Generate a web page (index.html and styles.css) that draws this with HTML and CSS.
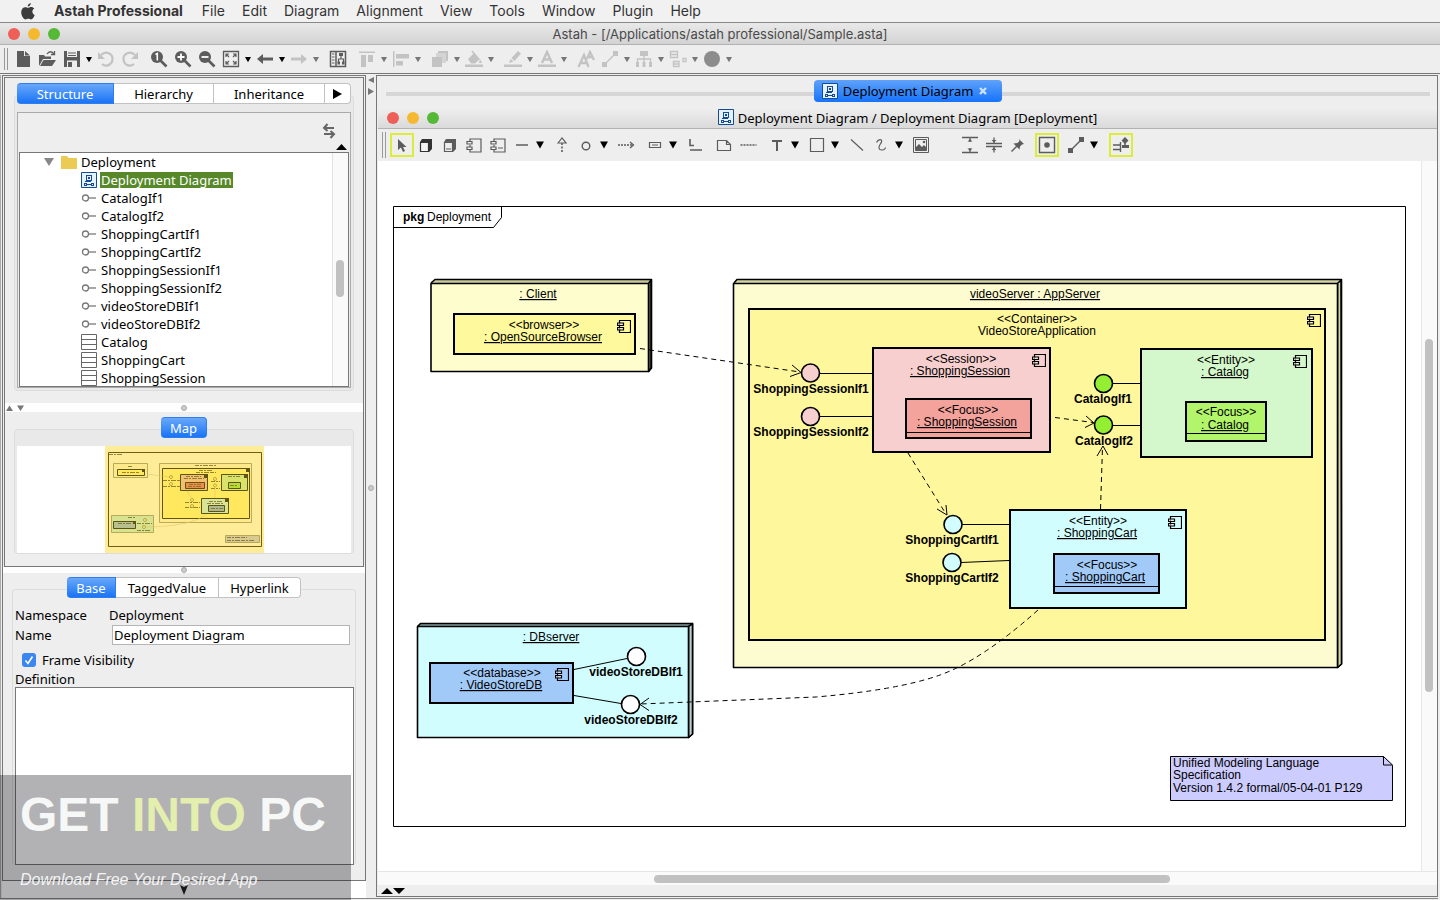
FILE: index.html
```html
<!DOCTYPE html>
<html lang="en">
<head>
<meta charset="utf-8">
<title>Astah - [/Applications/astah professional/Sample.asta]</title>
<link rel="stylesheet" href="styles.css">
</head>
<body>
<svg class="defs" aria-hidden="true">
  <symbol id="down" viewBox="0 0 8 8"><path d="M0 .5h8L4 7.5z" fill="currentColor"/></symbol>
  <symbol id="deploy" viewBox="0 0 16 16"><path d="M.5.5h15v15H.5z" fill="#e4f1ff" stroke="#154a94"/><path fill-rule="evenodd" fill="#154a94" d="M5 3h6v6H5zM6 4v4h4V4zM7 5h2v2H7zM4 9h6v1H4zM3 11h3v1h4v-1h3v3h-3v-1H6v1H3zM4 12v1h1v-1zM11 12v1h1v-1z"/></symbol>
  <symbol id="iface" viewBox="0 0 16 16"><circle cx="4.500" cy="8" r="3" fill="none" stroke="#777" stroke-width="1.300"/><path d="M7.500 8H15" stroke="#777" stroke-width="1.300"/></symbol>
  <symbol id="class" viewBox="0 0 16 16"><path d="M.5.5h15v15H.5zM.5 5.500h15M.5 10.500h15" fill="#fff" stroke="#666"/></symbol>
  <symbol id="comp" viewBox="0 0 14 14"><path d="M2.500.5h11v12h-11z" fill="none" stroke="#000" stroke-width="1.200"/><path d="M.5 3h6v2.500h-6zM.5 7.500h6V10h-6z" fill="#eee" fill-opacity=".6" stroke="#000" stroke-width="1.200"/></symbol>
  <symbol id="lens" viewBox="0 0 18 18"><circle cx="7" cy="7" r="6" fill="currentColor"/><path d="M10.500 10.500l6 6" stroke="currentColor" stroke-width="2.600"/></symbol>
</svg>

<nav class="menubar" aria-label="Application menu">
  <svg class="apple" viewBox="0 0 14 17"><path d="M9.800 0c.1 1.800-1.400 3.600-3.100 3.600C6.500 1.900 8.200.2 9.800 0zM7 4.800c.8 0 1.700-.8 3.200-.8 1.200 0 2.400.7 3 1.600-2.700 1.600-2.200 5.300.5 6.400C13 14 11.600 16.400 10 16.400c-1 0-1.400-.7-2.700-.7-1.300 0-1.800.7-2.700.7C2.500 16.400.2 12.600.2 9.300.2 6 2.200 4.200 4.200 4.200c1.200 0 2.100.6 2.800.6z" fill="#3c3c3c"/></svg>
  <button class="menu strong">Astah Professional</button>
  <button class="menu">File</button><button class="menu">Edit</button><button class="menu">Diagram</button><button class="menu">Alignment</button><button class="menu">View</button><button class="menu">Tools</button><button class="menu">Window</button><button class="menu">Plugin</button><button class="menu">Help</button>
</nav>

<header class="titlebar">
  <div class="lights"><button class="red" aria-label="Close"></button><button class="amber" aria-label="Minimize"></button><button class="green" aria-label="Zoom"></button></div>
  <h1>Astah - [/Applications/astah professional/Sample.asta]</h1>
</header>

<div class="toolbar main-tools" role="toolbar" aria-label="Main">
  <span class="grip"></span>
  <button class="tool" aria-label="New"><svg viewBox="0 0 18 18"><path d="M3 1h7v5h6v11H3zM11 1l5 4.500h-5z" fill="currentColor"/></svg></button>
  <button class="tool" aria-label="Open"><svg viewBox="0 0 18 18"><path d="M1 16V5h5l1 1.500h6V9H5zM5.500 10H18l-4 6H2z" fill="currentColor"/><path d="M9 4c2-3 5-3 7 0M16.500 1v3.500H13" fill="none" stroke="currentColor" stroke-width="1.300"/></svg></button>
  <button class="tool g1" aria-label="Save"><svg viewBox="0 0 18 18"><path d="M1 1h16v16H1z" fill="currentColor"/><path d="M4 1h10v6H4zM4 10.500h10V17H4z" fill="#eee"/><path d="M5 2.500h8v1H5zM5 5h8v1H5zM5 12h4v5H5z" fill="currentColor"/></svg></button>
  <button class="drop" aria-label="Save options"><svg><use href="#down"/></svg></button>
  <button class="tool off" aria-label="Undo"><svg viewBox="0 0 18 18"><path d="M4 5c5-5 12-1 11.500 4.500C15 15 9 17.500 5 14" fill="none" stroke="currentColor" stroke-width="2.200"/><path d="M1 2v7h7z" fill="currentColor"/></svg></button>
  <button class="tool off" aria-label="Redo"><svg viewBox="0 0 18 18"><path d="M14 5C9 0 2 4 2.500 9.500 3 15 9 17.500 13 14" fill="none" stroke="currentColor" stroke-width="2.200"/><path d="M17 2v7h-7z" fill="currentColor"/></svg></button>
  <button class="tool g5" aria-label="Actual size"><svg viewBox="0 0 18 18"><use href="#lens"/><path d="M5.500 4.500L7.300 3.500v7" fill="none" stroke="#fff" stroke-width="1.600"/></svg></button>
  <button class="tool" aria-label="Zoom in"><svg viewBox="0 0 18 18"><use href="#lens"/><path d="M3.500 7h7M7 3.500v7" stroke="#fff" stroke-width="1.800"/></svg></button>
  <button class="tool" aria-label="Zoom out"><svg viewBox="0 0 18 18"><use href="#lens"/><path d="M3.500 7h7" stroke="#fff" stroke-width="1.800"/></svg></button>
  <button class="tool" aria-label="Fit"><svg viewBox="0 0 18 18"><path d="M1.500 1.500h15v15h-15z" fill="none" stroke="currentColor" stroke-width="1.300"/><path d="M4 7V4h3M11 4h3v3M14 11v3h-3M7 14H4v-3M4 4l3 3M14 4l-3 3M14 14l-3-3M4 14l3-3" fill="none" stroke="currentColor" stroke-width="1.200"/></svg></button>
  <button class="drop" aria-label="Fit options"><svg><use href="#down"/></svg></button>
  <button class="tool" aria-label="Back"><svg viewBox="0 0 18 18"><path d="M1 9l6-5v3.500h10v3H7V14z" fill="currentColor"/></svg></button>
  <button class="drop" aria-label="Back history"><svg><use href="#down"/></svg></button>
  <button class="tool off" aria-label="Forward"><svg viewBox="0 0 18 18"><path d="M17 9l-6-5v3.500H1v3h10V14z" fill="currentColor"/></svg></button>
  <button class="drop dim" aria-label="Forward history"><svg><use href="#down"/></svg></button>
  <button class="tool g5" aria-label="Structure map"><svg viewBox="0 0 18 18"><path d="M1.500 1.500h15v15h-15zM7 1.500v15" fill="none" stroke="currentColor" stroke-width="1.500"/><path d="M3 4h2.500M3 7h2.500M3 10h2.500M3 13h2.500M12 6v3M9.500 13V9h5v4" fill="none" stroke="currentColor" stroke-width="1.200"/><path d="M10 3h4v3h-4zM8.500 11.500H11v3H8.500zM13 11.500h2.500v3H13z" fill="currentColor"/></svg></button>
  <button class="tool off g5" aria-label="Align top"><svg viewBox="0 0 18 18"><path d="M1 1.500h16v1.500H1zM3 5h5v12H3zM10 5h5v7h-5z" fill="currentColor"/></svg></button>
  <button class="drop dim" aria-label="Align top options"><svg><use href="#down"/></svg></button>
  <button class="tool off" aria-label="Align left"><svg viewBox="0 0 18 18"><path d="M1 1h1.500v16H1zM4 4h13v4.500H4zM4 11h7v4.500H4z" fill="currentColor"/></svg></button>
  <button class="drop dim" aria-label="Align left options"><svg><use href="#down"/></svg></button>
  <button class="tool off g5" aria-label="Depth"><svg viewBox="0 0 18 18"><path d="M7 1h10v10h-2V3H7z" fill="currentColor"/><path d="M5 3h10v10H5z" fill="currentColor" opacity=".6"/><path d="M1 7h10v10H1z" fill="currentColor"/></svg></button>
  <button class="drop dim" aria-label="Depth options"><svg><use href="#down"/></svg></button>
  <button class="tool off" aria-label="Fill color"><svg viewBox="0 0 18 18"><path d="M0 14.500h18V17H0zM3 9l6-6 6 6-5 4.500H6zM15 9l2 4h-3z" fill="currentColor"/><path d="M7 1l5 6" stroke="currentColor" stroke-width="1.500"/></svg></button>
  <button class="drop dim" aria-label="Fill color options"><svg><use href="#down"/></svg></button>
  <button class="tool off g5" aria-label="Line color"><svg viewBox="0 0 18 18"><path d="M0 14.500h18V17H0zM5 13l1.500-4 3 2.500zM7.500 8L14 1l3 2.500L10.500 11z" fill="currentColor"/></svg></button>
  <button class="drop dim" aria-label="Line color options"><svg><use href="#down"/></svg></button>
  <button class="tool off" aria-label="Font color"><svg viewBox="0 0 18 18"><path d="M0 14.500h18V17H0z" fill="currentColor"/><path d="M4 13L9 2l5 11M6 9.500h6" fill="none" stroke="currentColor" stroke-width="2.400"/></svg></button>
  <button class="drop dim" aria-label="Font color options"><svg><use href="#down"/></svg></button>
  <button class="tool off g5" aria-label="Font"><svg viewBox="0 0 18 18"><path d="M1.500 17L7 5l4.500 12M4 13h6M10 9l3-7 4 8M12 7h4" fill="none" stroke="currentColor" stroke-width="2.300"/></svg></button>
  <button class="tool off" aria-label="Line style"><svg viewBox="0 0 18 18"><path d="M1 12h5v5H1zM12 1h5v5h-5z" fill="currentColor"/><path d="M4 14L14 4" stroke="currentColor" stroke-width="1.500"/></svg></button>
  <button class="drop dim" aria-label="Line style options"><svg><use href="#down"/></svg></button>
  <button class="tool off" aria-label="Tree layout"><svg viewBox="0 0 18 18"><path d="M5 1h8v5H5zM1 12h3v5H1zM7.500 12h3v5h-3zM14 12h3v5h-3z" fill="currentColor"/><path d="M9 6v6M2.500 12V9h13v3" fill="none" stroke="currentColor" stroke-width="1.300"/></svg></button>
  <button class="drop dim" aria-label="Tree layout options"><svg><use href="#down"/></svg></button>
  <button class="tool off" aria-label="Auto layout"><svg viewBox="0 0 18 18"><path d="M1.500 1.500h7v6h-7zM1.500 4.500h7M4.500 11.500H10v5H4.500zM4.500 14H10M14 8.500h3v3h-3z" fill="none" stroke="currentColor" stroke-width="1.300"/></svg></button>
  <button class="drop dim" aria-label="Auto layout options"><svg><use href="#down"/></svg></button>
  <button class="tool mid" aria-label="Color theme"><svg viewBox="0 0 18 18"><circle cx="9" cy="9" r="8" fill="currentColor"/></svg></button>
  <button class="drop dim" aria-label="Color theme options"><svg><use href="#down"/></svg></button>
</div>

<main class="workspace">
  <div class="left">
    <div class="sidebar">
      <section class="upper">
        <div class="tabs" role="tablist"><button class="on w97">Structure</button><button class="w100">Hierarchy</button><button class="w111">Inheritance</button><button class="w26" aria-label="More tabs"><svg class="more" viewBox="0 0 9 10"><path d="M0 0l9 5-9 5z"/></svg></button></div>
        <div class="group">
          <div class="treebox">
            <div class="treetools">
              <button class="sync" aria-label="Link with diagram"><svg viewBox="0 0 14 16"><path d="M12 5H2M5.500 1L2 5l3.500 3M2 11h10M8.500 8l3.500 3-3.500 4" fill="none" stroke="#666" stroke-width="2"/></svg></button>
              <svg class="up" viewBox="0 0 11 6"><path d="M0 6l5.500-6L11 6z"/></svg>
            </div>
            <div class="tree">
              <ul>
                <li class="folder"><svg class="twist" viewBox="0 0 10 8"><path d="M0 0h10L5 8z" fill="#888"/></svg><svg viewBox="0 0 16 16"><path d="M0 2h6l1.500 2H16v11H0z" fill="#ebcb54"/></svg><span>Deployment</span></li>
                <li class="selected"><svg><use href="#deploy"/></svg><span>Deployment Diagram</span></li>
                <li><svg><use href="#iface"/></svg><span>CatalogIf1</span></li>
                <li><svg><use href="#iface"/></svg><span>CatalogIf2</span></li>
                <li><svg><use href="#iface"/></svg><span>ShoppingCartIf1</span></li>
                <li><svg><use href="#iface"/></svg><span>ShoppingCartIf2</span></li>
                <li><svg><use href="#iface"/></svg><span>ShoppingSessionIf1</span></li>
                <li><svg><use href="#iface"/></svg><span>ShoppingSessionIf2</span></li>
                <li><svg><use href="#iface"/></svg><span>videoStoreDBIf1</span></li>
                <li><svg><use href="#iface"/></svg><span>videoStoreDBIf2</span></li>
                <li><svg><use href="#class"/></svg><span>Catalog</span></li>
                <li><svg><use href="#class"/></svg><span>ShoppingCart</span></li>
                <li><svg><use href="#class"/></svg><span>ShoppingSession</span></li>
              </ul>
              <div class="vtrack"><i class="thumb"></i></div>
            </div>
          </div>
        </div>
        <div class="hsplit"><svg class="arrows" viewBox="0 0 20 6"><path d="M1 6l3.500-5.500L8 6zM12 .5h7L15.500 6z" fill="#777"/></svg><i class="knob"></i></div>
        <div class="tabs" role="tablist"><button class="on only">Map</button></div>
        <div class="group mapgroup">
          <div class="map">
            <svg width="159" height="107" viewBox="105 446 159 107">
              <path d="M105 446h159v107H105z" fill="#ffec98"/>
              <path d="M108.500 452.500h153v94h-153z" fill="none" stroke="#6e5f12"/>
              <g stroke="#a89a4a" stroke-width=".8"><path d="M113.500 463.500h34v14h-34z" fill="#fbe98a"/><path d="M159.500 463.500h92v59h-92z" fill="#fde98a"/><path d="M111.500 515.500h42v17h-42z" fill="#d7e38e"/><path d="M225.500 535.500h34v7h-34z" fill="#d9ca92"/></g>
              <g stroke="#5f5410"><path d="M117.500 469.500h27v6h-27z" fill="#ffe85c"/><path d="M162.500 468.500h87v50h-87z" fill="#ffe75e"/><path d="M180.500 474.500h27v16h-27z" fill="#f2c070"/><path d="M185.500 482.500h19v6h-19z" fill="#ee8e4c"/><path d="M221.500 474.500h26v16h-26z" fill="#d9e36c"/><path d="M228.500 482.500h12v6h-12z" fill="#b8dc38"/><path d="M201.500 498.500h27v15h-27z" fill="#d9e596"/><path d="M208.500 505.500h16v6h-16z" fill="#adb88e"/><path d="M113.500 521.500h22v7h-22z" fill="#b7c08e"/></g>
              <path d="M246 468h4v4h-4zM204 474h4v4h-4zM244 474h4v4h-4zM225 498h4v4h-4zM142 469h3v3h-3zM133 521h3v3h-3z" fill="#5f5410"/>
              <g fill="none" stroke="#7a6c24" stroke-width=".8" stroke-dasharray="4 1 2 1 5 1"><path d="M109 454.500h14M128 466.500h5M122 472.500h17M195 465.500h22M199 470.500h14M196 472.500h20M186 476.500h15M184 478.500h20M189 484.500h12M188 486.500h14M228 476.500h12M230 485.500h8M209 501.500h14M207 503.500h16M211 508.500h12M163 480.500h18M163 486.500h18M211 481.500h9M211 488.500h9M185 502.500h15M185 507.500h15M128 517.500h8M118 523.500h14M137 523.500h15M137 530.500h14M227 537.500h20M227 540.500h28"/></g>
              <g fill="#fff06e" stroke="#9d8d38" stroke-width=".7"><circle cx="171" cy="477" r="1.500"/><circle cx="171" cy="484" r="1.500"/><circle cx="215" cy="479" r="1.500"/><circle cx="215" cy="485.500" r="1.500"/><circle cx="192" cy="500" r="1.500"/><circle cx="192" cy="506" r="1.500"/><circle cx="145" cy="520" r="1.500"/><circle cx="144" cy="527" r="1.500"/></g>
              <path d="M147 474l22 3M187 491l5 8M215 498v-10M206 514q-12 12-60 13" fill="none" stroke="#dcc96a" stroke-width=".6"/>
            </svg>
          </div>
        </div>
      </section>
      <div class="hsplit slim"><i class="knob"></i></div>
      <section class="lower">
        <div class="tabs" role="tablist"><button class="on w49">Base</button><button class="w103">TaggedValue</button><button class="w82">Hyperlink</button></div>
        <form class="group props">
          <div class="row"><span class="key">Namespace</span><span>Deployment</span></div>
          <div class="row"><label class="key" for="name">Name</label><input id="name" type="text" value="Deployment Diagram"></div>
          <div class="row check"><input id="frame" type="checkbox" checked><label for="frame">Frame Visibility</label></div>
          <label class="deflabel" for="def">Definition</label>
          <textarea id="def"></textarea>
        </form>
      </section>
    </div>
    <div class="leftfoot"><svg viewBox="0 0 8 10"><path d="M0 0l4 2 4-2-4 10z" fill="#222"/></svg></div>
  </div>

  <div class="vsplit"><svg viewBox="0 0 6 18"><path d="M6 0v6L0 3zM0 11v7l6-3.500z" fill="#777"/></svg><i class="knob"></i></div>

  <section class="editor">
    <div class="doctabs"><div class="doctab"><button><svg><use href="#deploy"/></svg>Deployment Diagram</button><button class="close" aria-label="Close tab"><svg viewBox="0 0 8 8"><path d="M1 1l6 6M7 1L1 7" stroke="#cfe0fb" stroke-width="2.400"/></svg></button></div></div>
    <header class="titlebar inner">
      <div class="lights"><button class="red" aria-label="Close diagram"></button><button class="amber" aria-label="Minimize diagram"></button><button class="green" aria-label="Maximize diagram"></button></div>
      <h2><svg><use href="#deploy"/></svg>Deployment Diagram / Deployment Diagram [Deployment]</h2>
    </header>
    <div class="toolbar palette" role="toolbar" aria-label="Palette">
      <span class="grip"></span>
      <button class="tool lit" aria-label="Select"><svg viewBox="0 0 18 18"><path d="M5 3v11l3-2.500 2 4.500 2-1-2-4h3.500z" fill="currentColor"/></svg></button>
      <button class="tool" aria-label="Node"><svg viewBox="0 0 18 18"><path d="M3.500 6.500h8v9h-8z" fill="#f4f4f4" stroke="#333" stroke-width="1.200"/><path d="M3 6l2-3h10v10l-3 3V6z" fill="#333"/></svg></button>
      <button class="tool" aria-label="Node instance"><svg viewBox="0 0 18 18"><path d="M3.500 6.500h8v9h-8zM5 13h5" fill="none" stroke="currentColor" stroke-width="1.200"/><path d="M3 6l2-3h10v10l-3 3V6z" fill="currentColor"/></svg></button>
      <button class="tool" aria-label="Component"><svg viewBox="0 0 18 18"><path d="M5 5V3h11v13H5v-2M5 9v1.500M2 5.500h5v2.500H2zM2 11h5v2.500H2z" fill="none" stroke="currentColor" stroke-width="1.200"/></svg></button>
      <button class="tool" aria-label="Component instance"><svg viewBox="0 0 18 18"><path d="M5 5V3h11v13H5v-2M5 9v1.500M2 5.500h5v2.500H2zM2 11h5v2.500H2zM9 12h5" fill="none" stroke="currentColor" stroke-width="1.200"/></svg></button>
      <button class="tool" aria-label="Association"><svg viewBox="0 0 18 18"><path d="M3 9h12" stroke="currentColor" stroke-width="1.500"/></svg></button>
      <button class="drop" aria-label="Association options"><svg><use href="#down"/></svg></button>
      <button class="tool g4" aria-label="Realization"><svg viewBox="0 0 18 18"><path d="M5 7l4-5 4 5z" fill="none" stroke="currentColor" stroke-width="1.200"/><path d="M9 7v9" stroke="currentColor" stroke-width="1.600" stroke-dasharray="2 1.500"/></svg></button>
      <button class="tool" aria-label="Interface"><svg viewBox="0 0 18 18"><circle cx="9" cy="10" r="3.800" fill="none" stroke="currentColor" stroke-width="1.400"/></svg></button>
      <button class="drop" aria-label="Interface options"><svg><use href="#down"/></svg></button>
      <button class="tool g4" aria-label="Dependency"><svg viewBox="0 0 18 18"><path d="M1 9h14" stroke="currentColor" stroke-width="1.600" stroke-dasharray="2 1"/><path d="M13 6l3.500 3-3.500 3" fill="none" stroke="currentColor" stroke-width="1.300"/></svg></button>
      <button class="tool g5" aria-label="Artifact"><svg viewBox="0 0 18 18"><path d="M3.500 6.500h11v5h-11zM6 9h6" fill="none" stroke="currentColor" stroke-width="1.200"/></svg></button>
      <button class="drop" aria-label="Artifact options"><svg><use href="#down"/></svg></button>
      <button class="tool g4" aria-label="Link"><svg viewBox="0 0 18 18"><path d="M4 3v6.500h4M4 14h12" fill="none" stroke="currentColor" stroke-width="1.600"/></svg></button>
      <button class="tool g5" aria-label="Note"><svg viewBox="0 0 18 18"><path d="M2.500 4.500h9l4 4v6h-13zM11.500 4.500v4h4" fill="none" stroke="currentColor" stroke-width="1.200"/></svg></button>
      <button class="tool" aria-label="Note anchor"><svg viewBox="0 0 18 18"><path d="M1.500 9h16" stroke="currentColor" stroke-width="1.600" stroke-dasharray="2 1"/></svg></button>
      <button class="tool g5" aria-label="Text"><svg viewBox="0 0 18 18"><path d="M4 5h10M9 4v11" stroke="currentColor" stroke-width="2"/></svg></button>
      <button class="drop" aria-label="Text options"><svg><use href="#down"/></svg></button>
      <button class="tool g4" aria-label="Rectangle"><svg viewBox="0 0 18 18"><path d="M2.500 2.500h13v13h-13z" fill="none" stroke="currentColor" stroke-width="1.200"/></svg></button>
      <button class="drop" aria-label="Rectangle options"><svg><use href="#down"/></svg></button>
      <button class="tool g4" aria-label="Line"><svg viewBox="0 0 18 18"><path d="M3 3.500l12 11" stroke="currentColor" stroke-width="1.200"/></svg></button>
      <button class="tool" aria-label="Freehand"><svg viewBox="0 0 18 18"><path d="M4.500 6.500c2-4 6-3.500 5-.5-.7 2-3 3.500-2.500 6 .5 3 6 2.500 6.500-.5" fill="none" stroke="currentColor" stroke-width="1.200"/></svg></button>
      <button class="drop" aria-label="Freehand options"><svg><use href="#down"/></svg></button>
      <button class="tool g4" aria-label="Image"><svg viewBox="0 0 18 18"><path d="M1.500 1.500h15v15h-15zM3.500 3.500h11v11h-11z" fill="none" stroke="currentColor" stroke-width="1"/><path d="M4 14v-3l3-3 3 3 2-2 2 2v3z" fill="currentColor"/><circle cx="12" cy="6" r="1.300" fill="currentColor"/></svg></button>
      <button class="tool g25" aria-label="Expand vertically"><svg viewBox="0 0 18 18"><path d="M1 1.500h16M1 16.500h16M9 2v4M9 16v-4" stroke="currentColor" stroke-width="1.300"/><path d="M6.500 5.500L9 3l2.500 2.500zM6.500 12.500L9 15l2.500-2.500z" fill="currentColor"/></svg></button>
      <button class="tool" aria-label="Shrink vertically"><svg viewBox="0 0 18 18"><path d="M1 7.500h16M1 10.500h16M9 1.500v6M9 16.500v-6" stroke="currentColor" stroke-width="1.300"/><path d="M6.500 4L9 6.500 11.500 4zM6.500 14L9 11.500l2.500 2.500z" fill="currentColor"/></svg></button>
      <button class="tool" aria-label="Pin"><svg viewBox="0 0 18 18"><path d="M10 3l5 5-2 .5-2 2-.5 3L4.500 7.500l4-.5 2-2z" fill="currentColor"/><path d="M2.500 15.500L9 9" stroke="currentColor" stroke-width="1.500"/></svg></button>
      <button class="tool lit g5" aria-label="Snap"><svg viewBox="0 0 18 18"><path d="M1.500 1.500h15v15h-15z" fill="none" stroke="currentColor" stroke-width="1.400"/><circle cx="9" cy="9" r="2.800" fill="currentColor"/></svg></button>
      <button class="tool g5" aria-label="Connector"><svg viewBox="0 0 18 18"><path d="M1 12h5v5H1zM12 1h5v5h-5z" fill="currentColor"/><path d="M4 14L14 4" stroke="currentColor" stroke-width="1.500"/></svg></button>
      <button class="drop" aria-label="Connector options"><svg><use href="#down"/></svg></button>
      <button class="tool lit g9" aria-label="Auto route"><svg viewBox="0 0 18 18"><path d="M1 9h7M1 13.500h7M8.500 6v10" fill="none" stroke="currentColor" stroke-width="1.400"/><path d="M13 1l3.500 3.500L13 8 9.500 4.500zM10 9h7v3h-7z" fill="currentColor"/><path d="M13 7v3" stroke="currentColor" stroke-width="1.500"/></svg></button>
    </div>
    <div class="viewport">
      <div class="canvas">
        <svg width="1043" height="710" viewBox="378 161 1043 710" role="img" aria-label="Deployment diagram">
          <g fill="none" stroke="#000"><path d="M393.500 206.500h1012v620h-1012z"/><path d="M501.500 206.500v11l-8 10h-100"/></g>
          <text x="403" y="221" class="b">pkg</text><text x="427" y="221">Deployment</text>

          <g stroke="#000" stroke-width="1.600" stroke-linejoin="round">
            <path d="M431 283l4-3.500h216.500V368l-3 3.500" fill="#c9c99c"/><path d="M651 280l-2.500 3.500v88l2.500-3.500z" fill="#8a8a66"/><path d="M431 283.500h217.500v88H431z" fill="#fdfdce"/>
            <path d="M734 283l3-3.500h604.500V664l-4 3.500" fill="#d5d5a6"/><path d="M1341 280l-3.500 3.500v384l4-3.500z" fill="#d5d5a6"/><path d="M733.500 283.500h604v384h-604z" fill="#fdfbd0"/>
            <path d="M417.500 626.500l3-3h272V734l-4 3.500" fill="#7f9c9e"/><path d="M692.500 623.500l-4 3v111l4-3.500z" fill="#b0d0d2"/><path d="M417.500 626.500h271v111h-271z" fill="#d2fdfe"/>
          </g>
          <g stroke="#000" stroke-width="2">
            <path d="M454 314h181v40H454z" fill="#fdf99c"/>
            <path d="M749 309h576v331H749z" fill="#fef79c"/>
            <path d="M873 348h177v104H873z" fill="#f7cfcf"/><path d="M906 399h125v39H906z" fill="#f4a29c"/>
            <path d="M1141 349h171v108h-171z" fill="#d4f8cc"/><path d="M1186 402h80v39h-80z" fill="#b2f46a"/>
            <path d="M1010 510h176v98h-176z" fill="#d2fdfe"/><path d="M1054 554h105v39h-105z" fill="#a2caf9"/>
            <path d="M430 663h143v40H430z" fill="#a2caf9"/>
          </g>
          <g fill="none" stroke="#000">
            <path d="M907 432.500h123M1187 433.500h78M1055 586.500h103"/>
            <path d="M820 373.500h52M820 416.500h52M1113 383.500h27M1113 425.500h27M962 524.500h47M961 562.500l48-2M574 669.500l53-11M574 695.500l47 8"/>
            <g stroke-dasharray="5 4"><path d="M640 348.500L800 372"/><path d="M1055 417.500l38 5"/><path d="M908 453l38 61"/><path d="M1100.500 509l2-62"/><path d="M1038 610q-56 50-98 65t-124 22l-176 7"/></g>
            <path d="M792 365l9 7.500-11 4M1086 416l8 7-9 4.500M937 509l10 6-1-10M1097 456l6-10 5 9M649 698l-9 6.500 9 6"/>
          </g>
          <g stroke="#000" stroke-width="1.600">
            <circle cx="810.500" cy="373" r="9" fill="#f7cfcf"/><circle cx="810.500" cy="416.500" r="9" fill="#f7cfcf"/>
            <circle cx="1103.500" cy="383.500" r="9" fill="#94ee32"/><circle cx="1103.500" cy="425" r="9" fill="#94ee32"/>
            <circle cx="953" cy="524.500" r="9" fill="#d2fdfe"/><circle cx="952" cy="562.500" r="9" fill="#d2fdfe"/>
            <circle cx="636.500" cy="656.500" r="9" fill="#fff"/><circle cx="630.500" cy="704.500" r="9" fill="#fff"/>
          </g>
          <use href="#comp" x="617" y="320" width="14" height="14"/><use href="#comp" x="1307" y="314" width="14" height="14"/><use href="#comp" x="1032" y="354" width="14" height="14"/><use href="#comp" x="1293" y="355" width="14" height="14"/><use href="#comp" x="1168" y="516" width="14" height="14"/><use href="#comp" x="555" y="668" width="14" height="14"/>

          <g class="mid-text">
            <text x="538" y="298" class="u">: Client</text><text x="544" y="329">&lt;&lt;browser&gt;&gt;</text><text x="543" y="341" class="u">: OpenSourceBrowser</text>
            <text x="1035" y="298" class="u">videoServer : AppServer</text><text x="1037" y="323">&lt;&lt;Container&gt;&gt;</text><text x="1037" y="335">VideoStoreApplication</text>
            <text x="961" y="363">&lt;&lt;Session&gt;&gt;</text><text x="960" y="375" class="u">: ShoppingSession</text><text x="968" y="414">&lt;&lt;Focus&gt;&gt;</text><text x="967" y="426" class="u">: ShoppingSession</text>
            <text x="1226" y="364">&lt;&lt;Entity&gt;&gt;</text><text x="1225" y="376" class="u">: Catalog</text><text x="1226" y="416">&lt;&lt;Focus&gt;&gt;</text><text x="1225" y="429" class="u">: Catalog</text>
            <text x="1098" y="525">&lt;&lt;Entity&gt;&gt;</text><text x="1097" y="537" class="u">: ShoppingCart</text><text x="1107" y="569">&lt;&lt;Focus&gt;&gt;</text><text x="1105" y="581" class="u">: ShoppingCart</text>
            <text x="551" y="641" class="u">: DBserver</text><text x="502" y="677">&lt;&lt;database&gt;&gt;</text><text x="501" y="689" class="u">: VideoStoreDB</text>
            <g class="b"><text x="811" y="393">ShoppingSessionIf1</text><text x="811" y="436">ShoppingSessionIf2</text><text x="1103" y="403">CatalogIf1</text><text x="1104" y="445">CatalogIf2</text><text x="952" y="544">ShoppingCartIf1</text><text x="952" y="582">ShoppingCartIf2</text><text x="636" y="676">videoStoreDBIf1</text><text x="631" y="724">videoStoreDBIf2</text></g>
          </g>
          <path d="M1170.500 756.500h213l9 9v35h-222z" fill="#ccccfe" stroke="#000"/><path d="M1383.500 756.500v8.500h9z" fill="#ccccfe" stroke="#000"/>
          <text x="1173" y="767">Unified Modeling Language</text><text x="1173" y="779">Specification</text><text x="1173" y="792">Version 1.4.2 formal/05-04-01 P129</text>
        </svg>
      </div>
      <div class="vscroll"><i class="thumb"></i></div>
      <div class="hscroll"><i class="thumb"></i></div>
    </div>
    <div class="status"><svg viewBox="0 0 24 6"><path d="M0 6l6-6 6 6zM12 0h12l-6 6z"/></svg></div>
  </section>
</main>

<aside class="watermark">
  <p class="brand">GET <em>INTO</em> PC</p>
  <p class="tagline">Download Free Your Desired App</p>
</aside>
</body>
</html>
```
FILE: styles.css
```css
* { box-sizing: border-box; }
body {
  margin: 0;
  height: 100vh;
  display: flex;
  flex-direction: column;
  position: relative;
  overflow: hidden;
  background: #eee;
  color: #000;
  font: 14px/18px "Noto Sans", sans-serif;
}
button, input, textarea { font: inherit; color: inherit; }
button { border: 0; padding: 0; background: none; }
h1, h2, p, ul { margin: 0; padding: 0; font-weight: 400; }
.defs { position: absolute; width: 0; height: 0; }

/* menu and title bars */
.menubar {
  height: 23px;
  flex: none;
  display: flex;
  align-items: center;
  gap: 17px;
  padding-left: 21px;
  border-bottom: 1px solid #888;
  background: #f1f1f1;
  color: #333;
  font-family: Inter, sans-serif;
}
.apple { width: 14px; height: 17px; margin-right: 2px; }
.menu { white-space: nowrap; }
.menu.strong { font-weight: 700; margin-right: 2px; }
.titlebar {
  height: 22px;
  flex: none;
  display: grid;
  grid-template-columns: 1fr auto 1fr;
  align-items: center;
  padding: 0 8px;
  border-bottom: 1px solid #b2b2b2;
  background: linear-gradient(#e9e9e9, #d3d3d3);
}
.titlebar h1 { font: 13px/18px Inter, sans-serif; color: #4a4a4a; }
.titlebar h2 { display: flex; gap: 4px; font-size: 13px; line-height: 18px; white-space: nowrap; }
.titlebar h2 svg { width: 16px; height: 16px; }
.titlebar.inner { padding: 0 9px; background: linear-gradient(#f0f0f0, #dadada); }
.lights { display: flex; gap: 8px; }
.lights button { width: 12px; height: 12px; border-radius: 50%; }
.red { background: #ed5f57; }
.amber { background: #f5b92f; }
.green { background: #55b935; }

/* toolbars */
.toolbar { display: flex; align-items: center; flex: none; color: #5c5c5c; }
.main-tools { height: 29px; padding-left: 4px; border-bottom: 1px solid #777; }
.palette { height: 32px; padding-left: 4px; }
.grip { width: 4px; height: 22px; margin-right: 3px; border: 1px solid #999; border-width: 0 1px; }
.palette .grip { margin-right: 4px; height: 26px; }
.tool { width: 24px; height: 24px; display: grid; place-items: center; }
.tool > svg { width: 18px; height: 18px; }
.drop { width: 10px; height: 24px; display: grid; place-items: center; color: #000; }
.palette .drop { width: 12px; }
.drop svg { width: 6px; height: 7px; }
.palette .drop svg { width: 8px; height: 8px; }
.drop.dim { color: #777; }
.off { color: #c3c3c3; }
.mid { color: #8c8c8c; }
.lit { border: 2px solid #dcec38; }
.g1 { margin-left: 1px; }
.g4 { margin-left: 4px; }
.g5 { margin-left: 5px; }
.g9 { margin-left: 9px; }
.g25 { margin-left: 25px; }

/* workspace */
.workspace {
  flex: 1;
  min-height: 0;
  display: grid;
  grid-template-columns: 366px 10px 1fr;
  margin: 1px 2px 1px 0;
  border-bottom: 1px solid #888;
}
.left { display: flex; flex-direction: column; min-height: 0; padding-left: 1px; border-left: 1px solid #aaa; }
.sidebar { flex: 1; min-height: 0; display: flex; flex-direction: column; border: 1px solid #777; }
.upper { margin: 1px 1px 0; padding: 5px 0 12px; border: 1px solid #777; }
.tabs { display: flex; justify-content: center; position: relative; }
.tabs button {
  height: 21px;
  border: 1px solid #c2c2c2;
  border-left-width: 0;
  background: #fff;
  font-size: 13px;
  line-height: 18px;
}
.tabs .on { color: #fff; border-color: #2f7ef0; background: linear-gradient(#69a8fa, #1a74f6); }
.tabs button:first-child { border-radius: 4px 0 0 4px; }
.tabs button:last-child { border-radius: 0 4px 4px 0; }
.tabs .only { padding: 0 9px; border-radius: 4px; }
.tabs button:only-child { border-radius: 4px; }
.w97 { width: 97px; }
.w100 { width: 100px; }
.w111 { width: 111px; }
.w26 { width: 26px; }
.w49 { width: 49px; }
.w103 { width: 103px; }
.w82 { width: 82px; }
.more { width: 9px; height: 10px; }
.group { margin: -9px 9px 0; border: 1px solid #dcdcdc; border-radius: 4px; background: #e9e9e9; }
.upper > .group { padding: 16px 2px 2px; }
.treebox { border: 1px solid #aaa; padding: 0 1px; background: #eee; }
.treetools { height: 39px; display: flex; flex-direction: column; align-items: flex-end; justify-content: flex-end; gap: 5px; padding-right: 2px; }
.sync { margin-right: 11px; width: 14px; height: 16px; display: grid; }
.up { width: 11px; height: 6px; margin-bottom: 2px; }
.tree { height: 235px; display: flex; overflow: hidden; border: 1px solid #777; background: #fff; }
.tree ul { flex: 1; list-style: none; font-size: 13px; }
.tree li { height: 18px; display: flex; align-items: center; gap: 3px; padding-left: 61px; white-space: nowrap; }
.tree li svg { width: 16px; height: 16px; flex: none; }
.tree li span { line-height: 16px; padding: 0 1px; }
.tree .folder { padding-left: 24px; }
.tree .folder .twist { width: 10px; height: 8px; margin-right: 4px; }
.selected span { background: #57892a; color: #fff; }
.vtrack { width: 16px; border-left: 1px solid #e2e2e2; background: #fafafa; padding: 107px 0 0 3px; }
.thumb { display: block; border-radius: 4px; background: #c1c1c1; }
.vtrack .thumb { width: 8px; height: 37px; }
.hsplit { height: 9px; margin-top: 12px; margin-bottom: 5px; display: grid; grid-template-columns: 1fr auto 1fr; align-items: center; background: #fff; }
.hsplit .knob { grid-column: 2; }
.arrows { width: 20px; height: 6px; }
.knob { width: 6px; height: 6px; border: 1px solid #aaa; border-radius: 50%; background: #ccc; }
.slim { height: 6px; margin: 0 0 4px; }
.upper > .mapgroup { padding-bottom: 0; }
.map { display: flex; justify-content: center; background: #fff; }
.lower { flex: 1; min-height: 0; display: flex; flex-direction: column; padding-bottom: 15px; font-size: 13px; }
.props { flex: 1; min-height: 0; display: flex; flex-direction: column; border-bottom: 0; background: #eee; padding: 15px 1px 0 2px; }
.row { display: flex; align-items: center; height: 20px; }
.key { width: 94px; }
.row input[type="text"] { flex: 1; min-width: 0; height: 20px; margin: 0 4px 0 3px; padding: 0 1px; border: 1px solid #b5b5b5; background: #fff; }
.check { height: 22px; margin-top: 4px; gap: 6px; padding-left: 7px; }
.check input { appearance: none; width: 14px; height: 14px; margin: 0; border-radius: 3px; background: #3b86f0 url("data:image/svg+xml,%3Csvg xmlns='http://www.w3.org/2000/svg' viewBox='0 0 14 14'%3E%3Cpath d='M3.500 7.500l2.500 3 4.500-7' fill='none' stroke='%23fff' stroke-width='1.600'/%3E%3C/svg%3E"); }
.deflabel { height: 16px; line-height: 16px; }
.props textarea { flex: 1; min-height: 0; resize: none; border: 1px solid #777; background: #fff; }
.leftfoot { height: 17px; flex: none; display: flex; align-items: center; justify-content: center; background: #fff; }
.leftfoot svg { width: 8px; height: 10px; }
.vsplit { display: grid; grid-template-rows: 1fr auto 1fr; justify-items: center; padding-top: 2px; }
.vsplit svg { width: 6px; height: 18px; }

/* diagram editor */
.editor { min-width: 0; min-height: 0; display: flex; flex-direction: column; border: 1px solid #777; margin-bottom: 1px; padding-left: 1px; }
.doctabs { height: 31px; flex: none; display: flex; justify-content: center; align-items: flex-start; padding-top: 4px; margin: 0 7px 0 8px; background: linear-gradient(#d6d6d6, #d6d6d6) 0 16px / 100% 4px no-repeat; }
.doctab { display: flex; align-items: center; justify-content: center; height: 22px; padding: 0 15px 0 8px; gap: 6px; border-radius: 4px; background: linear-gradient(#5fa2fa, #1673fb); }
.doctab button { display: flex; gap: 5px; font-size: 13px; line-height: 16px; }
.doctab button svg { width: 16px; height: 16px; }
.doctab .close svg { width: 8px; height: 8px; }
.viewport { flex: 1; min-height: 0; display: grid; grid-template-columns: 1fr 16px; grid-template-rows: 1fr 14px; }
.canvas { min-width: 0; min-height: 0; overflow: hidden; background: #fff; }
.canvas svg { display: block; }
.canvas text { font: 12px "Liberation Sans", Arial, sans-serif; }
.canvas text.b, .canvas .b text { font-weight: 700; }
.u { text-decoration: underline; }
.mid-text { text-anchor: middle; }
.vscroll { background: #fafafa; border-left: 1px solid #e6e6e6; padding: 178px 0 0 3px; }
.vscroll .thumb { width: 8px; height: 353px; }
.hscroll { grid-column: 1 / 3; background: #fafafa; border-top: 1px solid #e6e6e6; padding: 3px 0 0 276px; }
.hscroll .thumb { width: 516px; height: 8px; }
.status { height: 11px; flex: none; padding: 3px 0 0 3px; display: flex; }
.status svg { width: 24px; height: 6px; }

/* watermark */
.watermark { position: absolute; left: 0; bottom: 0; width: 351px; height: 125px; padding: 12px 20px 0; background: rgba(0, 0, 8, .3); font-family: "Liberation Sans", Arial, sans-serif; pointer-events: none; }
.brand { font-size: 48px; line-height: 56px; font-weight: 700; color: #f6f7f7; white-space: nowrap; }
.brand em { font-style: normal; color: #e4eeae; }
.tagline { margin-top: 27px; font-size: 16px; line-height: 20px; font-style: italic; color: #f4f4f4; }
```
